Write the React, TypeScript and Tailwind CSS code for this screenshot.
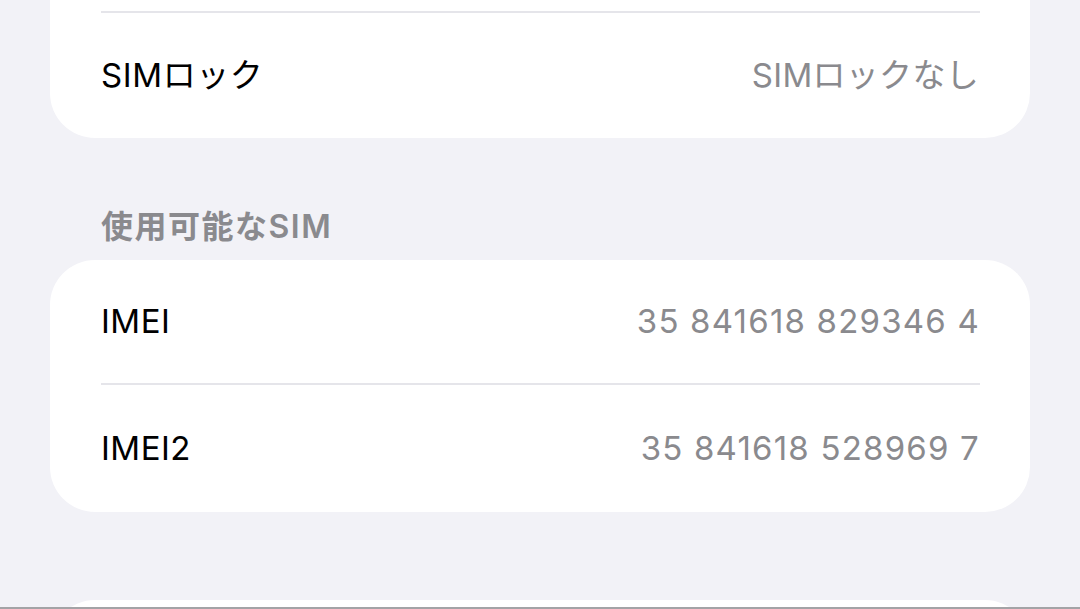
export default function App() {
  const font = { fontFamily: 'Inter, "Noto Sans CJK JP", sans-serif' };

  return (
    <div
      style={font}
      className="h-[609px] w-[1080px] overflow-hidden bg-[#f2f2f7] flex flex-col"
    >
      <div className="px-[50px] flex flex-col">
        {/* TOP CARD (scrolled up) */}
        <div className="mt-[-115px] rounded-[45px] bg-white flex flex-col">
          <div className="h-[126px]" />
          <div className="ml-[51px] mr-[50px] h-[2px] bg-[#e5e5ea]" />
          <div className="h-[125px] flex items-center justify-between pl-[51px] pr-[51px] text-[33px]">
            <span className="text-black tracking-[0.6px]">SIMロック</span>
            <span className="text-[#8a8a8e] tracking-[0.3px]">SIMロックなし</span>
          </div>
        </div>

        {/* SECTION HEADER */}
        <div className="h-[122px] flex items-end pb-[13px] pl-[51px]">
          <span className="text-[32px] leading-[40px] font-semibold tracking-[1.5px] text-[#8a8a8e]">
            使用可能なSIM
          </span>
        </div>

        {/* SIM CARD */}
        <div className="rounded-[45px] bg-white flex flex-col">
          <div className="h-[123px] flex items-center justify-between pl-[51px] pr-[50px] text-[33px]">
            <span className="text-black tracking-[0.5px]">IMEI</span>
            <span className="text-[#8a8a8e] tracking-[1.2px]">35 841618 829346 4</span>
          </div>
          <div className="ml-[51px] mr-[50px] h-[2px] bg-[#e5e5ea]" />
          <div className="h-[127px] flex items-center justify-between pl-[51px] pr-[50px] text-[33px]">
            <span className="text-black tracking-[0.5px]">IMEI2</span>
            <span className="text-[#8a8a8e] tracking-[1.2px]">35 841618 528969 7</span>
          </div>
        </div>

        {/* NEXT CARD (cut off) */}
        <div className="mt-[88px] h-[7px] overflow-hidden">
          <div className="h-[100px] rounded-[45px] bg-white" />
        </div>
      </div>
      <div className="h-[2px] bg-[#a3a3a6]" />
    </div>
  );
}
